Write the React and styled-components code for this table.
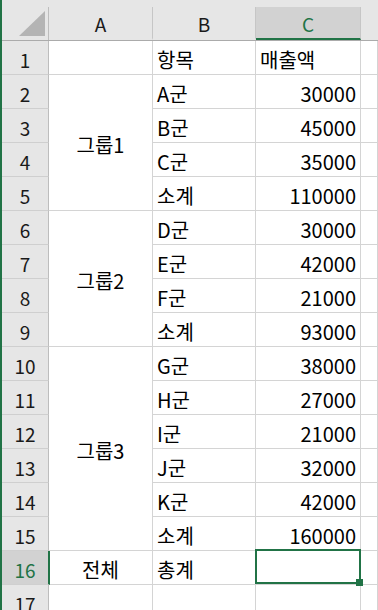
import React from 'react';
import styled, { createGlobalStyle } from 'styled-components';

const GlobalStyle = createGlobalStyle`
  html, body {
    margin: 0;
    padding: 0;
    background: #ffffff;
    overflow: hidden;
  }
  * {
    box-sizing: border-box;
  }
`;

const COLS = '47px 104px 103px 105px 1fr';
const GREEN = '#217346';

const Sheet = styled.div`
  width: 378px;
  height: 610px;
  overflow: hidden;
  border-left: 2px solid ${GREEN};
  font-family: "Noto Sans CJK KR", "Noto Sans", sans-serif;
  color: #000;
`;

const HeaderBar = styled.div`
  display: grid;
  grid-template-columns: ${COLS};
  padding-top: 7px;
  background: #e6e6e6;
  border-bottom: 1px solid #ababab;
`;

const Corner = styled.div`
  position: relative;
  height: 33px;
  border-right: 1px solid #bdbdbd;
`;

const CornerTriangle = styled.div`
  position: absolute;
  right: 3px;
  bottom: 4px;
  width: 26px;
  height: 25px;
  background: #b4b4b4;
  clip-path: polygon(100% 0, 100% 100%, 0 100%);
`;

const ColHeader = styled.div`
  height: 33px;
  display: flex;
  align-items: center;
  justify-content: center;
  font-size: 19px;
  border-right: 1px solid ${p => (p.$last ? 'transparent' : '#c6c6c6')};
  background: ${p => (p.$active ? '#d2d2d2' : 'transparent')};
  color: ${p => (p.$active ? GREEN : '#1a1a1a')};
  border-bottom: 2px solid ${p => (p.$active ? GREEN : 'transparent')};
  margin-bottom: ${p => (p.$active ? '-1px' : '0')};
  padding-top: 2px;
`;

const Body = styled.div`
  display: grid;
  grid-template-columns: ${COLS};
  grid-auto-rows: 34px;
`;

const RowHeader = styled.div`
  display: flex;
  align-items: center;
  justify-content: center;
  font-size: 19px;
  padding-top: 3px;
  background: ${p => (p.$active ? '#d2d2d2' : '#e6e6e6')};
  color: ${p => (p.$active ? GREEN : '#1a1a1a')};
  border-bottom: 1px solid #cfcfcf;
  border-right: ${p => (p.$active ? `2px solid ${GREEN}` : '1px solid #bdbdbd')};
  margin-right: ${p => (p.$active ? '-1px' : '0')};
  position: relative;
  z-index: ${p => (p.$active ? 1 : 0)};
`;

const Cell = styled.div`
  position: relative;
  display: flex;
  align-items: center;
  justify-content: ${p => (p.$align === 'right' ? 'flex-end' : p.$align === 'center' ? 'center' : 'flex-start')};
  padding: 4px 4px 0 4px;
  font-size: 20px;
  border-right: 1px solid #d4d4d4;
  border-bottom: 1px solid #d4d4d4;
  grid-row: ${p => (p.$span ? `span ${p.$span}` : 'auto')};
  white-space: nowrap;
`;

const Selection = styled.div`
  position: absolute;
  top: -2px;
  left: -1px;
  right: -1px;
  bottom: 0;
  border: 2px solid ${GREEN};
  pointer-events: none;
  z-index: 2;
`;

const FillHandle = styled.div`
  position: absolute;
  right: -4px;
  bottom: -4px;
  width: 7px;
  height: 7px;
  background: ${GREEN};
`;

const groups = [
  { name: '그룹1', rows: [['A군', '30000'], ['B군', '45000'], ['C군', '35000'], ['소계', '110000']] },
  { name: '그룹2', rows: [['D군', '30000'], ['E군', '42000'], ['F군', '21000'], ['소계', '93000']] },
  {
    name: '그룹3',
    rows: [['G군', '38000'], ['H군', '27000'], ['I군', '21000'], ['J군', '32000'], ['K군', '42000'], ['소계', '160000']],
  },
];

export default function App() {
  const cells = [];
  let rowNo = 1;

  cells.push(
    <RowHeader key="h1">1</RowHeader>,
    <Cell key="a1" />,
    <Cell key="b1">항목</Cell>,
    <Cell key="c1">매출액</Cell>,
    <Cell key="d1" />
  );
  rowNo++;

  groups.forEach(g => {
    g.rows.forEach(([item, value], i) => {
      cells.push(<RowHeader key={`h${rowNo}`}>{rowNo}</RowHeader>);
      if (i === 0) {
        cells.push(
          <Cell key={`a${rowNo}`} $align="center" $span={g.rows.length}>
            {g.name}
          </Cell>
        );
      }
      cells.push(
        <Cell key={`b${rowNo}`}>{item}</Cell>,
        <Cell key={`c${rowNo}`} $align="right">{value}</Cell>,
        <Cell key={`d${rowNo}`} />
      );
      rowNo++;
    });
  });

  cells.push(
    <RowHeader key="h16" $active>16</RowHeader>,
    <Cell key="a16" $align="center">전체</Cell>,
    <Cell key="b16">총계</Cell>,
    <Cell key="c16">
      <Selection>
        <FillHandle />
      </Selection>
    </Cell>,
    <Cell key="d16" />,
    <RowHeader key="h17">17</RowHeader>,
    <Cell key="a17" />,
    <Cell key="b17" />,
    <Cell key="c17" />,
    <Cell key="d17" />
  );

  return (
    <>
      <GlobalStyle />
      <Sheet>
        <HeaderBar>
          <Corner>
            <CornerTriangle />
          </Corner>
          <ColHeader>A</ColHeader>
          <ColHeader>B</ColHeader>
          <ColHeader $active>C</ColHeader>
          <ColHeader $last />
        </HeaderBar>
        <Body>{cells}</Body>
      </Sheet>
    </>
  );
}
